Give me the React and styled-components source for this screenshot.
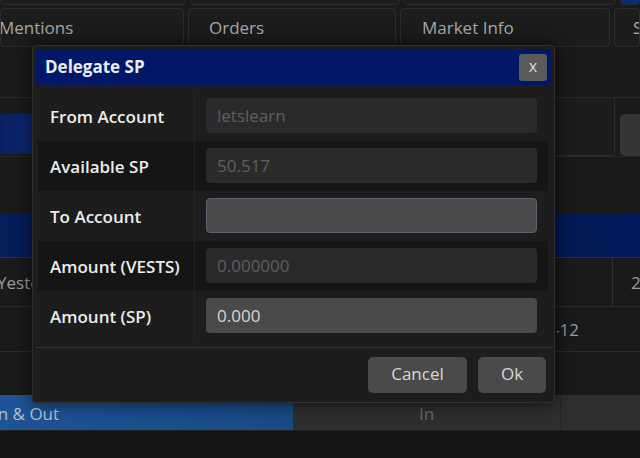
import styled, { createGlobalStyle } from "styled-components";

const Global = createGlobalStyle`
  html, body {
    margin: 0;
    padding: 0;
    background: #171717;
    font-family: "Open Sans", "Liberation Sans", sans-serif;
  }
`;

const Page = styled.div`
  position: relative;
  width: 640px;
  height: 458px;
  overflow: hidden;
  display: flex;
  flex-direction: column;
  background: #1a1a1a;
`;

const TopStrip = styled.div`
  height: 5px;
  display: flex;
  gap: 4px;
`;

const StripCell = styled.div`
  width: ${(p) => p.w}px;
  flex: ${(p) => (p.grow ? 1 : "none")};
  border: 1px solid #2c2c2c;
  border-top: none;
  border-radius: 0 0 4px 4px;
  background: ${(p) => (p.blue ? "#0a2a7a" : "#1c1c1c")};
`;

const TabRow = styled.div`
  height: 39px;
  margin-top: 3px;
  display: flex;
  gap: 4px;
`;

const Tab = styled.div`
  width: ${(p) => p.w}px;
  flex: ${(p) => (p.grow ? 1 : "none")};
  display: flex;
  align-items: center;
  padding-left: ${(p) => p.pad}px;
  box-sizing: border-box;
  border: 1px solid #2d2d2d;
  border-radius: 4px;
  background: #1c1c1c;
  color: #a9a9a9;
  font-size: 17px;
  white-space: nowrap;
  overflow: hidden;
`;

const Spacer = styled.div`
  height: ${(p) => p.h}px;
  border-bottom: ${(p) => (p.line ? "1px solid #2a2a2a" : "none")};
`;

const ControlRow = styled.div`
  height: 58px;
  display: flex;
  justify-content: space-between;
  align-items: flex-start;
  border-bottom: 1px solid #262626;
`;

const LeftBlue = styled.div`
  width: 34px;
  height: 40px;
  margin-top: 16px;
  background: linear-gradient(90deg, #08205f, #0b2a78);
`;

const RightControls = styled.div`
  display: flex;
  align-items: flex-start;
  gap: 5px;
`;

const DarkBox = styled.div`
  width: 78px;
  height: 57px;
  background: #1c1c1c;
  border-right: 1px solid #2e2e2e;
  border-bottom: 1px solid #2e2e2e;
  border-radius: 0 0 5px 0;
`;

const SmallButton = styled.div`
  width: 20px;
  height: 42px;
  margin-top: 16px;
  background: #353535;
  border-radius: 5px 0 0 5px;
`;

const BlueBand = styled.div`
  height: 44px;
  background: linear-gradient(90deg, #071d5c, #03134a 40%, #03134a 60%, #041a5a);
  border-bottom: 1px solid #303030;
`;

const CellRow = styled.div`
  height: ${(p) => p.h}px;
  display: flex;
  align-items: center;
  justify-content: space-between;
  border-bottom: 1px solid #2c2c2c;
  color: #9c9c9c;
  font-size: 17px;
`;

const Cell = styled.div`
  height: 100%;
  display: flex;
  align-items: center;
  padding-left: ${(p) => p.pad || 0}px;
  width: ${(p) => p.w}px;
  box-sizing: border-box;
  border-left: ${(p) => (p.divider ? "1px solid #2e2e2e" : "none")};
  white-space: nowrap;
  overflow: hidden;
`;

const BottomTabs = styled.div`
  height: 35px;
  display: flex;
  border-bottom: 1px solid #222;
`;

const BottomTab = styled.div`
  width: ${(p) => p.w}px;
  flex: ${(p) => (p.grow ? 1 : "none")};
  display: flex;
  align-items: center;
  padding-top: 1px;
  box-sizing: border-box;
  justify-content: ${(p) => (p.center ? "center" : "flex-start")};
  background: ${(p) =>
    p.active ? "linear-gradient(90deg, #1f5396, #174a86)" : "#2e2e2e"};
  border-left: ${(p) => (p.divider ? "1px solid #262626" : "none")};
  color: ${(p) => (p.active ? "#b5c2d4" : "#6b6b6b")};
  font-size: 17px;
  white-space: nowrap;
  overflow: hidden;
`;

const Floor = styled.div`
  flex: 1;
  background: #151515;
`;

/* modal */

const Modal = styled.div`
  position: absolute;
  left: 32px;
  top: 45px;
  width: 523px;
  height: 358px;
  box-sizing: border-box;
  padding: 3px 3px 0 3px;
  background: #1d1d1d;
  border: 1px solid #2f2f2f;
  border-radius: 4px;
  box-shadow: 0 0 18px rgba(0, 0, 0, 0.7);
  display: flex;
  flex-direction: column;
`;

const Header = styled.div`
  height: 36px;
  display: flex;
  align-items: center;
  justify-content: space-between;
  padding: 0 4px 0 9px;
  background: #021766;
  border-radius: 2px;
`;

const Title = styled.div`
  color: #e8ecf5;
  font-size: 17px;
  font-weight: 700;
  padding-bottom: 2px;
`;

const Close = styled.div`
  width: 28px;
  height: 27px;
  display: flex;
  align-items: center;
  justify-content: center;
  background: #5b5b5b;
  border-radius: 3px;
  color: #dcdcdc;
  font-size: 16px;
  padding-bottom: 2px;
  box-sizing: border-box;
`;

const Body = styled.div`
  padding: 6px 3px 0 2px;
  display: flex;
  flex-direction: column;
`;

const Row = styled.div`
  height: 50px;
  display: grid;
  grid-template-columns: 157px 1fr;
  background: ${(p) => (p.shade ? "#151515" : "#1d1d1d")};
`;

const Label = styled.div`
  display: flex;
  align-items: center;
  padding-left: 12px;
  color: #ececec;
  font-size: 17px;
  font-weight: 600;
  white-space: nowrap;
  border-right: 1px solid #232323;
`;

const Field = styled.div`
  display: flex;
  align-items: center;
  padding: 0 11px 1px 11px;
`;

const Input = styled.div`
  width: 100%;
  height: 35px;
  box-sizing: border-box;
  display: flex;
  align-items: center;
  padding-left: 10px;
  border-radius: 4px;
  font-size: 17px;
  background: ${(p) => (p.active ? "#4a4a4a" : "#2a2a2a")};
  color: ${(p) => (p.active ? "#d6d6d6" : "#5f5f5f")};
  border: 1px solid ${(p) => (p.focus ? "#5c6272" : "transparent")};
`;

const Divider = styled.div`
  height: 1px;
  margin: 6px 0 0 0;
  background: #363636;
`;

const Footer = styled.div`
  display: flex;
  justify-content: flex-end;
  gap: 11px;
  padding: 9px 5px 0 0;
`;

const Button = styled.div`
  width: ${(p) => p.w}px;
  height: 36px;
  box-sizing: border-box;
  padding-bottom: 3px;
  display: flex;
  align-items: center;
  justify-content: center;
  background: #4a4a4a;
  border-radius: 5px;
  color: #d8d8d8;
  font-size: 17px;
`;

const fields = [
  { label: "From Account", value: "letslearn" },
  { label: "Available SP", value: "50.517", shade: true },
  { label: "To Account", value: "", active: true, focus: true },
  { label: "Amount (VESTS)", value: "0.000000", shade: true },
  { label: "Amount (SP)", value: "0.000", active: true },
];

const App = () => {
  return (
    <>
      <Global />
      <Page>
        <TopStrip>
          <StripCell w={184} />
          <StripCell w={208} />
          <StripCell w={210} />
          <StripCell grow blue />
        </TopStrip>
        <TabRow>
          <Tab w={184} pad={0}>
            <span style={{ marginLeft: -2 }}>Mentions</span>
          </Tab>
          <Tab w={208} pad={20}>Orders</Tab>
          <Tab w={210} pad={21}>Market Info</Tab>
          <Tab grow pad={18}>S</Tab>
        </TabRow>
        <Spacer h={50} line />
        <ControlRow>
          <LeftBlue />
          <RightControls>
            <DarkBox />
            <SmallButton />
          </RightControls>
        </ControlRow>
        <Spacer h={56} />
        <BlueBand />
        <CellRow h={48}>
          <Cell w={34}>
            <span style={{ marginLeft: -3 }}>Yesterday</span>
          </Cell>
          <Cell w={28} divider pad={18}>
            24
          </Cell>
        </CellRow>
        <CellRow h={44}>
          <Cell w={20} />
          <Cell w={83}>
            <span style={{ marginLeft: -3 }}>-12</span>
          </Cell>
        </CellRow>
        <Spacer h={43} />
        <BottomTabs>
          <BottomTab w={293} active>
            <span style={{ marginLeft: -7 }}>In &amp; Out</span>
          </BottomTab>
          <BottomTab w={267} center>
            In
          </BottomTab>
          <BottomTab grow divider />
        </BottomTabs>
        <Floor />

        <Modal>
          <Header>
            <Title>Delegate SP</Title>
            <Close>x</Close>
          </Header>
          <Body>
            {fields.map((f) => (
              <Row key={f.label} shade={f.shade}>
                <Label>{f.label}</Label>
                <Field>
                  <Input active={f.active} focus={f.focus}>
                    {f.value}
                  </Input>
                </Field>
              </Row>
            ))}
          </Body>
          <Divider />
          <Footer>
            <Button w={99}>Cancel</Button>
            <Button w={68}>Ok</Button>
          </Footer>
        </Modal>
      </Page>
    </>
  );
};

export default App;
